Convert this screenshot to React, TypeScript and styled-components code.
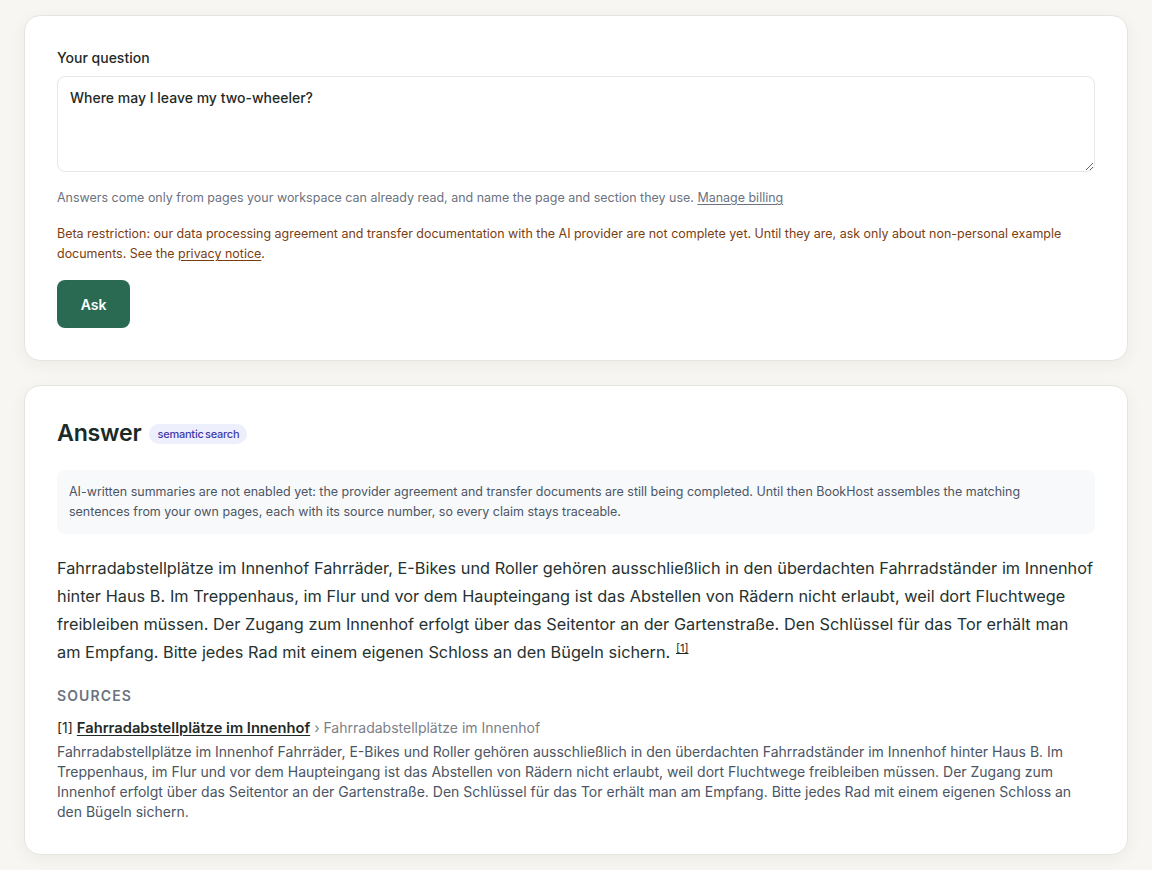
import React from "react";
import styled, { createGlobalStyle } from "styled-components";

const Global = createGlobalStyle`
  * { box-sizing: border-box; }
  html, body { margin: 0; padding: 0; background: #f7f6f2; }
  body { font-family: Inter, "Noto Sans", sans-serif; color: #1f2a27; -webkit-font-smoothing: antialiased; }
`;

const Page = styled.main`
  padding: 15px 24px 24px;
  display: flex;
  flex-direction: column;
  gap: 24px;
`;

const Card = styled.section`
  background: #ffffff;
  border: 1px solid #e6e4de;
  border-radius: 16px;
  box-shadow: 0 4px 16px rgba(40, 35, 20, 0.05);
  padding: 32px;
`;

const Label = styled.label`
  display: block;
  font-size: 14px;
  font-weight: 500;
  line-height: 20px;
  color: #1f2a27;
  margin-bottom: 8px;
`;

const TextArea = styled.textarea`
  display: block;
  width: 100%;
  height: 96px;
  padding: 11px 12px;
  font-family: Inter, "Noto Sans", sans-serif;
  font-size: 14px;
  font-weight: 500;
  line-height: 20px;
  color: #1f2a27;
  border: 1px solid #e6e6e3;
  border-radius: 8px;
  resize: vertical;
  outline: none;
  background: #fff;
`;

const Hint = styled.p`
  margin: 16px 0 0;
  font-size: 12.48px;
  line-height: 20px;
  color: #6b7280;
`;

const Warning = styled.p`
  margin: 16px 0 0;
  font-size: 12.48px;
  line-height: 20px;
  color: #7a3d10;
`;

const InlineLink = styled.a`
  color: inherit;
  text-decoration: underline;
  text-underline-offset: 2px;
`;

const Button = styled.button`
  margin-top: 16px;
  height: 48px;
  width: 73px;
  border: none;
  border-radius: 8px;
  background: #2b6a52;
  color: #fff;
  font-family: Inter, "Noto Sans", sans-serif;
  font-size: 14px;
  font-weight: 600;
  cursor: pointer;
`;

const HeadingRow = styled.div`
  display: flex;
  align-items: center;
  gap: 8px;
`;

const Heading = styled.h2`
  margin: 0;
  font-size: 23.2px;
  font-weight: 600;
  line-height: 30px;
  color: #1a2b26;
  letter-spacing: -0.01em;
`;

const Badge = styled.span`
  display: inline-flex;
  align-items: center;
  height: 20px;
  padding: 0 8px;
  border-radius: 999px;
  background: #eeeffc;
  color: #3f3aa8;
  font-size: 11px;
  font-weight: 500;
  letter-spacing: -0.02em;
  word-spacing: -0.12em;
  margin-top: 1px;
`;

const Notice = styled.div`
  margin-top: 22px;
  background: #f8f9fb;
  border-radius: 8px;
  padding: 12px;
  font-size: 12.48px;
  line-height: 20px;
  color: #4b5563;
`;

const AnswerText = styled.p`
  margin: 20px 0 0;
  font-size: 16.3px;
  word-spacing: 0.12px;
  line-height: 28px;
  color: #263230;
`;

const Cite = styled.sup`
  font-size: 11px;
  line-height: 0;
  margin-left: 1px;
  text-decoration: underline;
  color: #1f2a27;
`;

const SourcesTitle = styled.h3`
  margin: 20px 0 0;
  font-size: 14px;
  font-weight: 600;
  line-height: 20px;
  letter-spacing: 0.08em;
  text-transform: uppercase;
  color: #6b7280;
`;

const SourceItem = styled.div`
  margin-top: 12px;
`;

const SourceHead = styled.div`
  font-size: 14px;
  line-height: 20px;
  color: #1f2a27;
`;

const SourceLink = styled.a`
  color: #1f2a27;
  font-size: 14.7px;
  font-weight: 600;
  text-decoration: underline;
  text-underline-offset: 2px;
`;

const Crumb = styled.span`
  color: #7b8089;
`;

const Snippet = styled.p`
  margin: 4px 0 0;
  font-size: 14px;
  line-height: 20px;
  color: #4b5563;
`;

export default function App() {
  return (
    <>
      <Global />
      <Page>
        <Card>
          <Label htmlFor="q">Your question</Label>
          <TextArea id="q" defaultValue="Where may I leave my two-wheeler?" />
          <Hint>
            Answers come only from pages your workspace can already read, and name the page and section they use.{" "}
            <InlineLink href="#">Manage billing</InlineLink>
          </Hint>
          <Warning>
            Beta restriction: our data processing agreement and transfer documentation with the AI provider are not complete yet. Until they are, ask only about non-personal example documents. See the{" "}
            <InlineLink href="#">privacy notice</InlineLink>.
          </Warning>
          <Button>Ask</Button>
        </Card>
        <Card>
          <HeadingRow>
            <Heading>Answer</Heading>
            <Badge>semantic search</Badge>
          </HeadingRow>
          <Notice>
            AI-written summaries are not enabled yet: the provider agreement and transfer documents are still being completed. Until then BookHost assembles the matching sentences from your own pages, each with its source number, so every claim stays traceable.
          </Notice>
          <AnswerText>
            Fahrradabstellplätze im Innenhof Fahrräder, E-Bikes und Roller gehören ausschließlich in den überdachten Fahrradständer im Innenhof hinter Haus B. Im Treppenhaus, im Flur und vor dem Haupteingang ist das Abstellen von Rädern nicht erlaubt, weil dort Fluchtwege freibleiben müssen. Der Zugang zum Innenhof erfolgt über das Seitentor an der Gartenstraße. Den Schlüssel für das Tor erhält man am Empfang. Bitte jedes Rad mit einem eigenen Schloss an den Bügeln sichern.{" "}
            <Cite>[1]</Cite>
          </AnswerText>
          <SourcesTitle>Sources</SourcesTitle>
          <SourceItem>
            <SourceHead>
              [1] <SourceLink href="#">Fahrradabstellplätze im Innenhof</SourceLink>{" "}
              <Crumb>› Fahrradabstellplätze im Innenhof</Crumb>
            </SourceHead>
            <Snippet>
              Fahrradabstellplätze im Innenhof Fahrräder, E-Bikes und Roller gehören ausschließlich in den überdachten Fahrradständer im Innenhof hinter Haus B. Im Treppenhaus, im Flur und vor dem Haupteingang ist das Abstellen von Rädern nicht erlaubt, weil dort Fluchtwege freibleiben müssen. Der Zugang zum Innenhof erfolgt über das Seitentor an der Gartenstraße. Den Schlüssel für das Tor erhält man am Empfang. Bitte jedes Rad mit einem eigenen Schloss an den Bügeln sichern.
            </Snippet>
          </SourceItem>
        </Card>
      </Page>
    </>
  );
}
